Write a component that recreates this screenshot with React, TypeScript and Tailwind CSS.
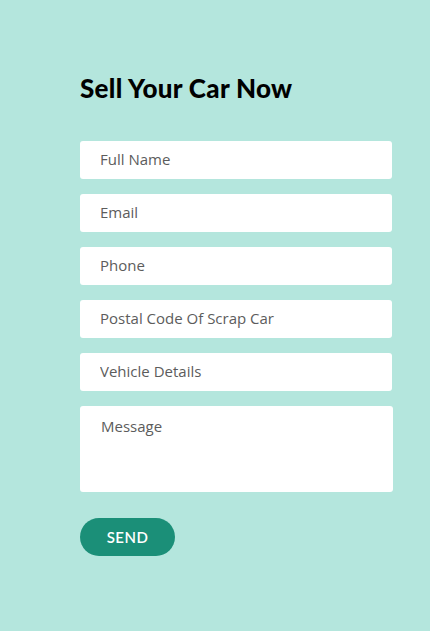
export default function App() {
  const fields = ['Full Name', 'Email', 'Phone', 'Postal Code Of Scrap Car', 'Vehicle Details'];
  return (
    <div className="min-h-[631px] w-full bg-[#b4e6dd] pl-[80px] pr-[38px] pt-[72px]" style={{ fontFamily: 'Lato, "Open Sans", sans-serif' }}>
      <h1 className="text-[26px] font-black leading-[32px] text-black tracking-[0.3px]">Sell Your Car Now</h1>
      <form className="mt-[37px] flex flex-col gap-[15px]" onSubmit={(e) => e.preventDefault()}>
        {fields.map((f) => (
          <input
            key={f}
            type="text"
            placeholder={f}
            className="h-[38px] w-full rounded-[3px] bg-white px-[20px] pb-[3px] text-[15px] text-[#333] outline-none placeholder:text-[#5c5c5c]"
            style={{ fontFamily: '"Open Sans", sans-serif' }}
          />
        ))}
        <textarea
          placeholder="Message"
          className="h-[86px] w-[313px] resize-none rounded-[3px] bg-white px-[21px] pt-[9px] text-[15px] text-[#333] outline-none placeholder:text-[#5c5c5c]"
          style={{ fontFamily: '"Open Sans", sans-serif' }}
        />
        <div className="mt-[11px]">
          <button type="submit" className="h-[38px] w-[95px] rounded-full bg-[#1b8f78] text-[15px] font-semibold tracking-[0.5px] text-white">
            SEND
          </button>
        </div>
      </form>
    </div>
  );
}
